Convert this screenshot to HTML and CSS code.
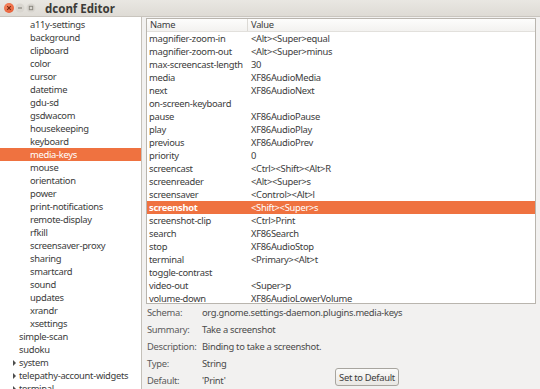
FILE: index.html
```html
<!DOCTYPE html>
<html>
<head>
<meta charset="utf-8">
<link rel="stylesheet" href="styles.css">
</head>
<body>
<div class="window">
  <div class="titlebar">
    <div class="controls">
      <span class="btn-close"><svg width="10" height="10" viewBox="0 0 10 10"><path d="M3.2 3.2 L6.8 6.8 M6.8 3.2 L3.2 6.8" stroke="#7a2a10" stroke-width="1.2"/></svg></span>
      <span class="btn-min"><svg width="10" height="10" viewBox="0 0 10 10"><circle cx="5" cy="5" r="4.5" fill="#d9d6d0"/><path d="M3 5 H7" stroke="#8a877f" stroke-width="1.2"/></svg></span>
      <span class="btn-max"><svg width="10" height="10" viewBox="0 0 10 10"><circle cx="5" cy="5" r="4.5" fill="#d9d6d0"/><rect x="3.3" y="3.3" width="3.4" height="3.4" fill="none" stroke="#8a877f" stroke-width="1"/></svg></span>
    </div>
    <div class="title">dconf Editor</div>
  </div>
  <div class="main">
    <div class="tree">
      <div class="trow child">a11y-settings</div>
      <div class="trow child">background</div>
      <div class="trow child">clipboard</div>
      <div class="trow child">color</div>
      <div class="trow child">cursor</div>
      <div class="trow child">datetime</div>
      <div class="trow child">gdu-sd</div>
      <div class="trow child">gsdwacom</div>
      <div class="trow child">housekeeping</div>
      <div class="trow child">keyboard</div>
      <div class="trow child selected">media-keys</div>
      <div class="trow child">mouse</div>
      <div class="trow child">orientation</div>
      <div class="trow child">power</div>
      <div class="trow child">print-notifications</div>
      <div class="trow child">remote-display</div>
      <div class="trow child">rfkill</div>
      <div class="trow child">screensaver-proxy</div>
      <div class="trow child">sharing</div>
      <div class="trow child">smartcard</div>
      <div class="trow child">sound</div>
      <div class="trow child">updates</div>
      <div class="trow child">xrandr</div>
      <div class="trow child">xsettings</div>
      <div class="trow top">simple-scan</div>
      <div class="trow top">sudoku</div>
      <div class="trow top"><span class="arrow"></span>system</div>
      <div class="trow top"><span class="arrow"></span>telepathy-account-widgets</div>
      <div class="trow top"><span class="arrow"></span>terminal</div>
    </div>
    <div class="handle"></div>
    <div class="right">
      <div class="table">
        <div class="thead">
          <div class="th name">Name</div>
          <div class="th value">Value</div>
        </div>
        <div class="tr"><span class="c1">magnifier-zoom-in</span><span class="c2">&lt;Alt&gt;&lt;Super&gt;equal</span></div>
        <div class="tr"><span class="c1">magnifier-zoom-out</span><span class="c2">&lt;Alt&gt;&lt;Super&gt;minus</span></div>
        <div class="tr"><span class="c1">max-screencast-length</span><span class="c2">30</span></div>
        <div class="tr"><span class="c1">media</span><span class="c2">XF86AudioMedia</span></div>
        <div class="tr"><span class="c1">next</span><span class="c2">XF86AudioNext</span></div>
        <div class="tr"><span class="c1">on-screen-keyboard</span><span class="c2"></span></div>
        <div class="tr"><span class="c1">pause</span><span class="c2">XF86AudioPause</span></div>
        <div class="tr"><span class="c1">play</span><span class="c2">XF86AudioPlay</span></div>
        <div class="tr"><span class="c1">previous</span><span class="c2">XF86AudioPrev</span></div>
        <div class="tr"><span class="c1">priority</span><span class="c2">0</span></div>
        <div class="tr"><span class="c1">screencast</span><span class="c2">&lt;Ctrl&gt;&lt;Shift&gt;&lt;Alt&gt;R</span></div>
        <div class="tr"><span class="c1">screenreader</span><span class="c2">&lt;Alt&gt;&lt;Super&gt;s</span></div>
        <div class="tr"><span class="c1">screensaver</span><span class="c2">&lt;Control&gt;&lt;Alt&gt;l</span></div>
        <div class="tr selected"><span class="c1 bold">screenshot</span><span class="c2">&lt;Shift&gt;&lt;Super&gt;s</span></div>
        <div class="tr"><span class="c1">screenshot-clip</span><span class="c2">&lt;Ctrl&gt;Print</span></div>
        <div class="tr"><span class="c1">search</span><span class="c2">XF86Search</span></div>
        <div class="tr"><span class="c1">stop</span><span class="c2">XF86AudioStop</span></div>
        <div class="tr"><span class="c1">terminal</span><span class="c2">&lt;Primary&gt;&lt;Alt&gt;t</span></div>
        <div class="tr"><span class="c1">toggle-contrast</span><span class="c2"></span></div>
        <div class="tr"><span class="c1">video-out</span><span class="c2">&lt;Super&gt;p</span></div>
        <div class="tr"><span class="c1">volume-down</span><span class="c2">XF86AudioLowerVolume</span></div>
      </div>
      <div class="details">
        <div class="drow"><span class="lbl">Schema:</span><span class="val">org.gnome.settings-daemon.plugins.media-keys</span></div>
        <div class="drow"><span class="lbl">Summary:</span><span class="val">Take a screenshot</span></div>
        <div class="drow"><span class="lbl">Description:</span><span class="val">Binding to take a screenshot.</span></div>
        <div class="drow"><span class="lbl">Type:</span><span class="val">String</span></div>
        <div class="drow"><span class="lbl">Default:</span><span class="val fixed">'Print'</span><button class="setdef">Set to Default</button></div>
      </div>
    </div>
  </div>
</div>
</body>
</html>
```
FILE: styles.css
```css
html, body {
  margin: 0;
  padding: 0;
}
body {
  width: 540px;
  height: 389px;
  overflow: hidden;
  font-family: "Noto Sans", "DejaVu Sans", sans-serif;
  font-size: 9.4px;
  letter-spacing: -0.3px;
  color: #3c3c3c;
  background: #f2f1f0;
}
.window {
  display: flex;
  flex-direction: column;
  height: 389px;
}
.titlebar {
  height: 17px;
  flex: 0 0 17px;
  display: flex;
  align-items: center;
  background: linear-gradient(#e9e7e2, #dedbd5);
  border-bottom: 1px solid #c9c5be;
  box-sizing: border-box;
}
.controls {
  display: flex;
  align-items: center;
  gap: 1px;
  padding-left: 4px;
  width: 41px;
}
.controls span {
  display: flex;
  width: 10px;
  height: 10px;
}
.btn-close {
  border-radius: 50%;
  background: radial-gradient(circle at 40% 35%, #f68a64, #e4512a);
}
.title {
  font-weight: bold;
  font-size: 11.5px;
  letter-spacing: 0;
  color: #3c3b37;
}
.main {
  flex: 1;
  display: flex;
  min-height: 0;
}
.tree {
  width: 142px;
  flex: 0 0 142px;
  background: #fff;
  border-right: 1px solid #c4c0b9;
  box-sizing: border-box;
  overflow: hidden;
  padding-top: 1px;
}
.trow {
  height: 13px;
  line-height: 13px;
  white-space: nowrap;
  display: flex;
  align-items: center;
}
.trow.child { padding-left: 30px; }
.trow.top { padding-left: 19px; }
.trow.selected {
  background: #ef7240;
  color: #fff;
}
.arrow {
  width: 0;
  height: 0;
  border-top: 3px solid transparent;
  border-bottom: 3px solid transparent;
  border-left: 3px solid #4c4c4c;
  margin-left: -6px;
  margin-right: 3px;
}
.handle {
  width: 4px;
  flex: 0 0 4px;
  background: #f2f1f0;
}
.right {
  flex: 1;
  display: flex;
  flex-direction: column;
  padding-right: 4px;
}
.table {
  margin-top: 1px;
  border: 1px solid #b9b5ae;
  background: #fff;
  height: 289px;
  box-sizing: border-box;
  overflow: hidden;
}
.thead {
  display: flex;
  height: 12px;
  line-height: 12px;
  background: linear-gradient(#fdfdfc, #f3f2f0);
  border-bottom: 1px solid #e2e0dc;
}
.th.name {
  width: 97px;
  padding-left: 3px;
  border-right: 1px solid #dcdad5;
}
.th.value { padding-left: 3px; }
.tr {
  display: flex;
  height: 13px;
  line-height: 13px;
  white-space: nowrap;
}
.c1 {
  width: 99px;
  padding-left: 2px;
  flex: 0 0 auto;
}
.c2 { padding-left: 3px; }
.bold { font-weight: bold; }
.tr.selected {
  background: #ef7240;
  color: #fff;
}
.details {
  display: flex;
  flex-direction: column;
}
.drow {
  display: flex;
  align-items: center;
  height: 17px;
  white-space: nowrap;
}
.lbl {
  width: 55px;
  padding-left: 1px;
  color: #5a5a5a;
}
.val { color: #4a4a4a; }
.val.fixed { width: 133px; }
.setdef {
  margin-top: -7px;
  height: 18px;
  width: 64px;
  padding: 0;
  font-family: inherit;
  font-size: 9.4px;
  letter-spacing: -0.3px;
  color: #3c3c3c;
  border: 1px solid #a8a59f;
  border-radius: 3px;
  background: linear-gradient(#fbfbfa, #e9e7e3);
}
```
